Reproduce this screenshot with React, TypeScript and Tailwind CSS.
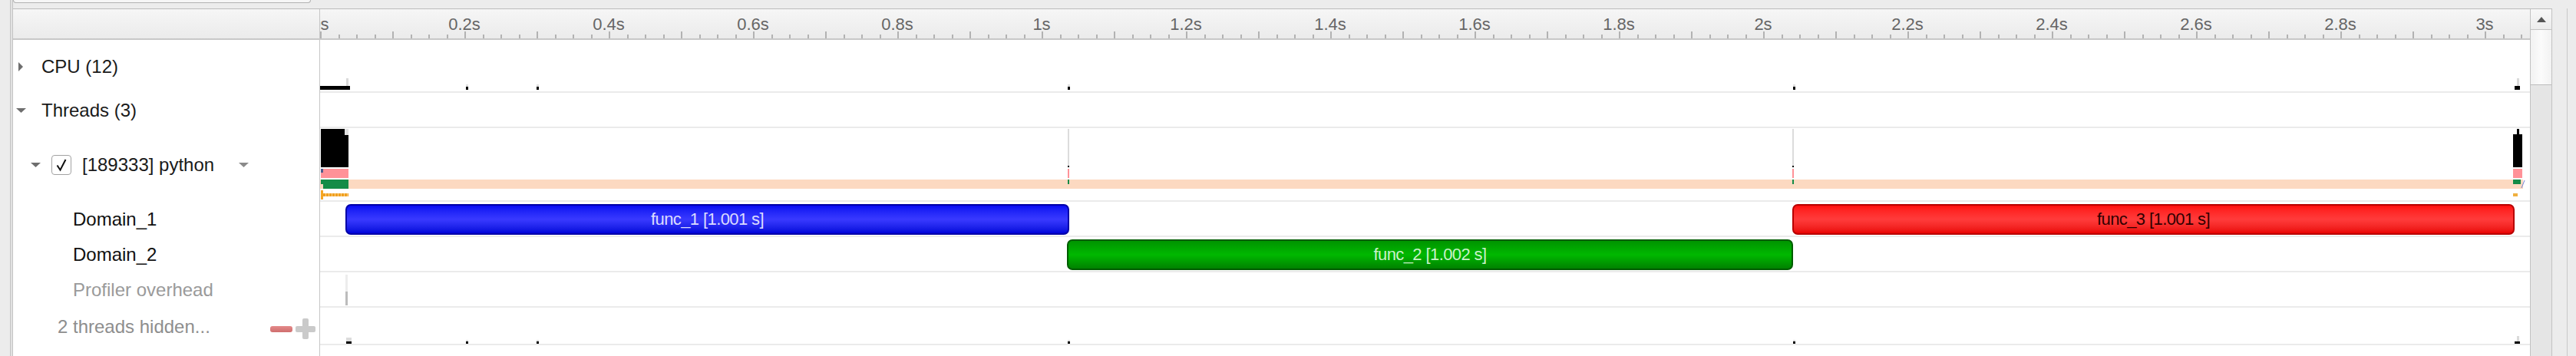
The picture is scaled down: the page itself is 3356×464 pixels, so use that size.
import React from 'react';

// timeline scale: 0s sits at the left edge of the track area
const PX_PER_SEC = 940;

const labels = Array.from({ length: 16 }, (_, i) => i * 0.2);
const ticks = Array.from({ length: 123 }, (_, i) => i);

const fmt = (t: number) => {
  const r = Math.round(t * 10) / 10;
  return Number.isInteger(r) ? `${r}s` : `${r.toFixed(1)}s`;
};

// small sample markers (x relative to the track start)
const cpuDots = [190, 282, 974, 1919];

const TriangleRight = () => (
  <svg width="6" height="12" viewBox="0 0 6 12" className="shrink-0">
    <path d="M0 0 L6 6 L0 12 Z" fill="#6e6e6e" />
  </svg>
);

const TriangleDown = ({ color = '#6e6e6e' }: { color?: string }) => (
  <svg width="13" height="6" viewBox="0 0 13 6" className="shrink-0">
    <path d="M0 0 L13 0 L6.5 6 Z" fill={color} />
  </svg>
);

const Checkbox = () => (
  <div className="w-[26px] h-[26px] shrink-0 rounded-[4px] border-[1.5px] border-[#a2a2a2] bg-white flex items-center justify-center">
    <svg width="18" height="18" viewBox="0 0 18 18">
      <path d="M3.5 9.5 L7.5 15.5 L14.5 2" fill="none" stroke="#111" strokeWidth="2" />
    </svg>
  </div>
);

type BarProps = { left: number; width: number; label: string; kind: 'blue' | 'green' | 'red' };

const FuncBar = ({ left, width, label, kind }: BarProps) => {
  const styles = {
    blue: 'border-[#0000a8] bg-linear-to-b from-[#0808f2] via-[#3939ff] to-[#0000da] text-[#dcdcff]',
    green: 'border-[#005c00] bg-linear-to-b from-[#009400] via-[#00b800] to-[#008200] text-[#c8f2c8]',
    red: 'border-[#b80000] bg-linear-to-b from-[#ff0d0d] via-[#ff3b3b] to-[#ea0000] text-[#300000]',
  }[kind];
  return (
    <div
      className={`absolute top-[3px] h-[40px] rounded-[7px] border-2 flex items-center justify-center text-[22px] tracking-[-0.6px] leading-none ${styles}`}
      style={{ left, width }}
    >
      {label}
    </div>
  );
};

const Box = ({ x, y, w, h, c }: { x: number; y: number; w: number; h: number; c: string }) => (
  <div className="absolute" style={{ left: x, top: y, width: w, height: h, background: c }} />
);

const Row = ({ h, left, children, last }: { h: string; left: React.ReactNode; children?: React.ReactNode; last?: boolean }) => (
  <div className={`flex shrink-0 ${h}`}>
    <div className="w-[400px] shrink-0 border-r border-[#c6c6c6] flex items-center">{left}</div>
    <div className={`relative flex-1 overflow-hidden ${last ? '' : 'border-b-2 border-[#ebebeb]'}`}>{children}</div>
  </div>
);

export default function App() {
  return (
    <div className="w-[3356px] h-[464px] bg-[#ececec] flex overflow-hidden font-['Liberation_Sans',Arial,sans-serif] text-[24px]">
      <div className="w-[13px] shrink-0" />
      <div className="w-[4px] shrink-0 border-x border-[#c4c4c4] bg-[#e2e2e2]" />

      <div className="flex-1 flex flex-col">
        {/* top toolbar strip, search field cut off */}
        <div className="h-[11px] shrink-0">
          <div className="w-[388px] h-[4px] border-x border-b border-[#b2b2b2] rounded-b-[5px] bg-[#f6f6f6]" />
        </div>

        <div className="flex-1 flex">
          <div className="w-[3308px] shrink-0 flex border-t border-[#bcbcbc] bg-white">
            <div className="w-[3279px] shrink-0 flex flex-col">
              {/* header / ruler */}
              <div className="h-[40px] shrink-0 flex border-b-2 border-[#c8c8c8] bg-linear-to-b from-[#f6f6f6] to-[#ebebeb]">
                <div className="w-[400px] shrink-0 border-r border-[#c6c6c6]" />
                <div className="relative flex-1 overflow-hidden">
                  {labels.map((t) => (
                    <div
                      key={t}
                      className="absolute top-[9px] -translate-x-1/2 text-[22px] leading-[22px] text-[#666]"
                      style={{ left: t * PX_PER_SEC }}
                    >
                      {fmt(t)}
                    </div>
                  ))}
                  {ticks.map((i) => (
                    <div
                      key={i}
                      className={`absolute bottom-0 w-[2px] bg-[#b2b2b2] ${i % 4 === 0 ? 'h-[9px]' : 'h-[5px]'}`}
                      style={{ left: i * 23.5 }}
                    />
                  ))}
                </div>
              </div>

              {/* CPU */}
              <Row
                h="h-[69px]"
                left={
                  <div className="flex items-center pl-[7px] text-[#1a1a1a]">
                    <TriangleRight />
                    <span className="ml-[24px]">CPU (12)</span>
                  </div>
                }
              >
                <Box x={34} y={50} w={3} h={12} c="#dadada" />
                <Box x={0} y={60} w={39} h={5} c="#000" />
                {cpuDots.map((x) => (
                  <React.Fragment key={x}>
                    <Box x={x} y={58} w={3} h={3} c="#dedede" />
                    <Box x={x} y={61} w={3} h={4} c="#000" />
                  </React.Fragment>
                ))}
                <Box x={2862} y={50} w={3} h={10} c="#dadada" />
                <Box x={2859} y={60} w={7} h={5} c="#000" />
              </Row>

              {/* Threads */}
              <Row
                h="h-[46px]"
                left={
                  <div className="flex items-center pl-[4px] text-[#1a1a1a]">
                    <TriangleDown />
                    <span className="ml-[20px]">Threads (3)</span>
                  </div>
                }
              />

              {/* python thread activity */}
              <Row
                h="h-[96px]"
                left={
                  <div className="flex items-center pl-[23px] text-[#1a1a1a]">
                    <TriangleDown />
                    <div className="ml-[14px]">
                      <Checkbox />
                    </div>
                    <span className="ml-[14px]">[189333] python</span>
                    <div className="ml-[32px]">
                      <TriangleDown color="#8a8a8a" />
                    </div>
                  </div>
                }
              >
                <Box x={1} y={1} w={36} h={50} c="#000" />
                <Box x={32} y={1} w={5} h={8} c="#e2e2e2" />
                <Box x={1} y={53} w={36} h={12} c="#ff9298" />
                <Box x={1} y={53} w={3} h={5} c="#4d5b8c" />
                <Box x={0} y={67} w={2870} h={12} c="#fcd9c1" />
                <Box x={1} y={67} w={36} h={12} c="#148c47" />
                <Box x={1} y={73} w={3} h={6} c="#fcd9c1" />
                <Box x={1} y={81} w={3} h={12} c="#f5a623" />
                <div className="absolute left-[4px] top-[85px] w-[33px] h-[4px] bg-[repeating-linear-gradient(90deg,#f0a020_0_3px,#fcd08a_3px_4px)]" />
                {[974, 1918].map((x) => (
                  <React.Fragment key={x}>
                    <Box x={x} y={1} w={2} h={48} c="#dcdcdc" />
                    <Box x={x} y={49} w={2} h={2} c="#000" />
                    <Box x={x} y={53} w={2} h={12} c="#ff9298" />
                    <Box x={x} y={67} w={2} h={6} c="#148c47" />
                  </React.Fragment>
                ))}
                <Box x={2862} y={1} w={3} h={8} c="#000" />
                <Box x={2857} y={8} w={12} h={43} c="#000" />
                <Box x={2857} y={53} w={12} h={12} c="#ff9298" />
                <Box x={2857} y={67} w={10} h={6} c="#148c47" />
                <Box x={2857} y={85} w={6} h={4} c="#f0b040" />
                <svg className="absolute left-[2867px] top-[68px]" width="6" height="10" viewBox="0 0 6 10">
                  <path d="M5 0 L1 10" stroke="#7082d8" strokeWidth="1" />
                </svg>
              </Row>

              {/* Domain_1 */}
              <Row h="h-[46px]" left={<span className="pl-[78px] text-[#111]">Domain_1</span>}>
                <FuncBar kind="blue" left={33} width={943} label="func_1 [1.001 s]" />
                <FuncBar kind="red" left={1918} width={941} label="func_3 [1.001 s]" />
              </Row>

              {/* Domain_2 */}
              <Row h="h-[46px]" left={<span className="pl-[78px] text-[#111]">Domain_2</span>}>
                <FuncBar kind="green" left={973} width={946} label="func_2 [1.002 s]" />
              </Row>

              {/* Profiler overhead */}
              <Row h="h-[46px]" left={<span className="pl-[78px] text-[#9a9a9a]">Profiler overhead</span>}>
                <Box x={33} y={3} w={3} h={22} c="#ededed" />
                <Box x={33} y={25} w={3} h={18} c="#bcbcbc" />
              </Row>

              {/* hidden threads */}
              <Row
                h="h-[49px]"
                left={
                  <div className="flex-1 flex items-center justify-between pl-[58px] pr-[5px]">
                    <span className="text-[#8e8e8e]">2 threads hidden...</span>
                    <div className="flex items-center gap-[4px] mt-[6px]">
                      <div className="w-[29px] h-[8px] rounded-[3px] bg-linear-to-b from-[#e48a8a] to-[#cf6e6e]" />
                      <div className="relative w-[26px] h-[27px]">
                        <div className="absolute left-0 top-[10px] w-[26px] h-[8px] rounded-[2px] bg-[#cacaca]" />
                        <div className="absolute left-[9px] top-0 w-[8px] h-[27px] rounded-[2px] bg-[#cacaca]" />
                      </div>
                    </div>
                  </div>
                }
              >
                <Box x={34} y={39} w={7} h={5} c="#dcdcdc" />
                <Box x={34} y={44} w={7} h={3} c="#000" />
                {cpuDots.map((x) => (
                  <React.Fragment key={x}>
                    <Box x={x} y={42} w={3} h={2} c="#dedede" />
                    <Box x={x} y={44} w={3} h={3} c="#000" />
                  </React.Fragment>
                ))}
                <Box x={2862} y={37} w={3} h={7} c="#dadada" />
                <Box x={2859} y={44} w={7} h={3} c="#000" />
              </Row>

              <Row h="flex-1" last left={null} />
            </div>

            {/* vertical scrollbar */}
            <div className="w-[29px] shrink-0 flex flex-col border-x border-[#c2c2c2] bg-[#e5e5e5]">
              <div className="h-[27px] shrink-0 flex items-center justify-center border-b border-[#c2c2c2] bg-linear-to-b from-[#f7f7f7] to-[#ececec]">
                <svg width="12" height="7" viewBox="0 0 12 7">
                  <path d="M0 7 L6 0 L12 7 Z" fill="#555" />
                </svg>
              </div>
              <div className="h-[72px] shrink-0 border-b border-[#bcbcbc] bg-linear-to-r from-[#f2f2f2] via-[#fbfbfb] to-[#f2f2f2]" />
              <div className="flex-1" />
            </div>
          </div>

          <div className="flex-1 flex">
            <div className="w-[19px] shrink-0" />
            <div className="w-[1px] shrink-0 bg-[#c8c8c8]" />
          </div>
        </div>
      </div>
    </div>
  );
}
